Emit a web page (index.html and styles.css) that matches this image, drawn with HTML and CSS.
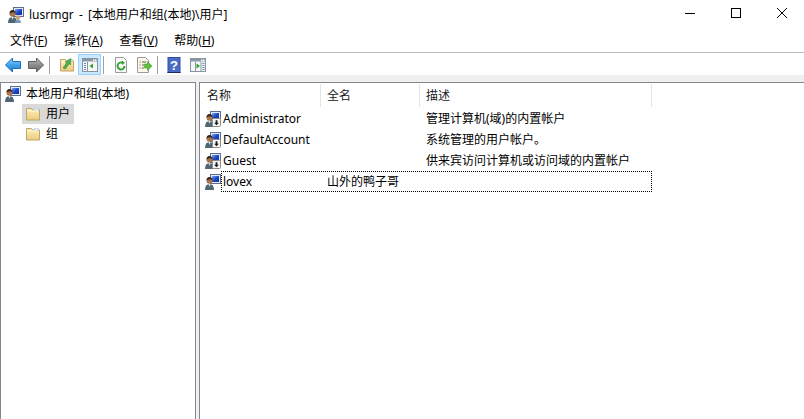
FILE: index.html
```html
<!DOCTYPE html>
<html lang="zh-CN">
<head>
<meta charset="utf-8">
<title>lusrmgr</title>
<link rel="stylesheet" href="styles.css">
</head>
<body>
<svg class="defs" width="0" height="0" aria-hidden="true">
  <defs>
    <linearGradient id="fold" x1="0" y1="0" x2="0" y2="1"><stop offset="0" stop-color="#fdf0bd"/><stop offset="1" stop-color="#eecb7c"/></linearGradient>
    <linearGradient id="scr" x1="0" y1="0" x2="1" y2="1"><stop offset="0" stop-color="#7fa8f5"/><stop offset=".5" stop-color="#1c47c9"/><stop offset="1" stop-color="#12309a"/></linearGradient>
    <linearGradient id="blu" x1="0" y1="0" x2="0" y2="1"><stop offset="0" stop-color="#9bd8fb"/><stop offset=".5" stop-color="#3ea3ec"/><stop offset="1" stop-color="#1f78c8"/></linearGradient>
    <linearGradient id="gry" x1="0" y1="0" x2="0" y2="1"><stop offset="0" stop-color="#c4c4c4"/><stop offset=".5" stop-color="#8c8c8c"/><stop offset="1" stop-color="#6c6c6c"/></linearGradient>
    <symbol id="folder" viewBox="0 0 16 16">
      <path d="M1.500 2.500h5l1 1.500h7v10h-13z" fill="url(#fold)" stroke="#bfa56b"/>
      <path d="M9 2.500h4.500v1.500H9z" fill="#fff" stroke="#a9c6de" stroke-width=".6"/>
      <path d="M2.500 5h11" stroke="#fff8dc"/>
    </symbol>
    <symbol id="person" viewBox="0 0 16 16">
      <rect x="5.500" y=".5" width="10" height="9" fill="#e4eaf4" stroke="#5d6f90"/>
      <rect x="7" y="2" width="7" height="6" fill="url(#scr)"/>
      <circle cx="4.500" cy="6.800" r="3" fill="#a9744a"/>
      <path d="M1.500 6.500q0-3.500 3-3.500t3 3.500q-1.500-1.500-3-1.200t-3 1.200z" fill="#33241a"/>
      <path d="M0 16q0-6 4.500-6T9 16z" fill="#4f6675"/>
      <path d="M3.500 10h2l-1 3z" fill="#e2e2e2"/>
    </symbol>
    <symbol id="down" viewBox="0 0 16 16">
      <use href="#person"/>
      <rect x="7.500" y="7.500" width="8" height="8" rx="1" fill="#f6f6f6" stroke="#8c8c8c"/>
      <path d="M10.600 9.300h1.800v2.400h1.500l-2.400 2.600-2.400-2.600h1.500z" fill="#1a1a1a"/>
    </symbol>
    <symbol id="pane" viewBox="0 0 16 16">
      <rect x=".5" y="1.500" width="15" height="13" fill="#f6f6f6" stroke="#8795a0"/>
      <rect x="1" y="2" width="14" height="2.500" fill="#8a98a3"/>
      <rect x="11" y="2.500" width="1.500" height="1.500" fill="#fff"/><rect x="13" y="2.500" width="1.500" height="1.500" fill="#fff"/>
      <path d="M5.500 5v9" stroke="#8795a0"/>
    </symbol>
  </defs>
</svg>
<div class="window">
  <header class="titlebar">
    <svg class="app-icon" viewBox="0 0 16 16"><use href="#person"/><circle cx="10" cy="10.500" r="2.200" fill="#c9a27e"/><path d="M7 16q0-3.500 3-3.500t3 3.500z" fill="#7d9ab5"/></svg>
    <span class="title">lusrmgr - [本地用户和组(本地)\用户]</span>
    <div class="controls">
      <span class="ctl"><svg width="10" height="10" viewBox="0 0 10 10"><path d="M0 5.500h10" stroke="#000"/></svg></span>
      <span class="ctl"><svg width="10" height="10" viewBox="0 0 10 10"><rect x=".5" y=".5" width="9" height="9" fill="none" stroke="#000"/></svg></span>
      <span class="ctl"><svg width="10" height="10" viewBox="0 0 10 10"><path d="M0 0l10 10M10 0L0 10" stroke="#000" fill="none"/></svg></span>
    </div>
  </header>
  <nav class="menubar">
    <span class="menu">文件(<u>F</u>)</span>
    <span class="menu">操作(<u>A</u>)</span>
    <span class="menu">查看(<u>V</u>)</span>
    <span class="menu">帮助(<u>H</u>)</span>
  </nav>
  <div class="toolbar">
    <span class="tool"><svg class="ticon" viewBox="0 0 16 16"><path d="M.5 8L7.500 1v3.500h8v7h-8V15z" fill="url(#blu)" stroke="#1f6fb8"/></svg></span>
    <span class="tool"><svg class="ticon" viewBox="0 0 16 16"><path d="M15.500 8L8.500 1v3.500h-8v7h8V15z" fill="url(#gry)" stroke="#5e5e5e"/></svg></span>
    <span class="sep"></span>
    <span class="tool"><svg class="ticon" viewBox="0 0 16 16"><use href="#folder"/><path d="M4 11l3.500-5L6 5l6-3.500-.5 6.500L10 6.800 6.500 12z" fill="#4eb04a" stroke="#2f7d2c" stroke-width=".5"/></svg></span>
    <span class="tool active"><svg class="ticon" viewBox="0 0 16 16"><use href="#pane"/><path d="M2 6.500h2M2 8.500h2M2 10.500h2M2 12.500h2" stroke="#5a8cc0"/><path d="M11 6.500v5l-3.500-2.500z" fill="#2ca02c"/></svg></span>
    <span class="sep"></span>
    <span class="tool"><svg class="ticon" viewBox="0 0 16 16"><path d="M2.500.5h8l3 3v12h-11z" fill="#fafafa" stroke="#9a9a9a"/><path d="M11.500 9a3.500 3.500 0 1 1-1.500-2.900" fill="none" stroke="#37a337" stroke-width="2"/><path d="M8.500 3.500l3.500 2-2.500 2.500z" fill="#37a337"/></svg></span>
    <span class="tool"><svg class="ticon" viewBox="0 0 16 16"><path d="M1.500.5h8l3 3v12h-11z" fill="#fdf9e8" stroke="#9a9a9a"/><path d="M3.500 5h1M6 5h4M3.500 8h1M6 8h2M3.500 11h1M6 11h2" stroke="#555"/><path d="M8.500 7h3V4.500L16 9l-4.500 4.500V11h-3z" fill="#5fbf3c" stroke="#3d8f26" stroke-width=".5"/></svg></span>
    <span class="sep"></span>
    <span class="tool help-tool"><svg class="ticon" viewBox="0 0 16 16"><rect x="1.500" y="0" width="13" height="16" fill="#2f4fa8"/><rect x="2.500" y="1" width="11" height="14" fill="#4a6cc4"/><rect x="1.500" y="15" width="13" height="1" fill="#1b2c68"/><text x="8" y="13" class="help">?</text></svg></span>
    <span class="tool"><svg class="ticon" viewBox="0 0 16 16"><use href="#pane"/><path d="M11 5v9" stroke="#8795a0"/><path d="M12.500 6.500h2M12.500 8.500h2M12.500 10.500h2M12.500 12.500h2" stroke="#5a8cc0"/><path d="M6.500 6.500v5l3.500-2.500z" fill="#2ca02c"/></svg></span>
  </div>
  <main class="panes">
    <aside class="tree">
      <div class="root"><svg class="icon" viewBox="0 0 16 16"><use href="#person"/></svg><span>本地用户和组(本地)</span></div>
      <div class="node selected"><svg class="icon" viewBox="0 0 16 16"><use href="#folder"/></svg><span>用户</span></div>
      <div class="node"><svg class="icon" viewBox="0 0 16 16"><use href="#folder"/></svg><span>组</span></div>
    </aside>
    <section class="list">
      <div class="row head">
        <span class="c1 hcell">名称</span><span class="c2 hcell">全名</span><span class="c3 hcell">描述</span>
      </div>
      <div class="row"><span class="c1"><svg class="icon" viewBox="0 0 16 16"><use href="#down"/></svg><span class="name">Administrator</span></span><span class="c2"></span><span class="c3">管理计算机(域)的内置帐户</span></div>
      <div class="row"><span class="c1"><svg class="icon" viewBox="0 0 16 16"><use href="#down"/></svg><span class="name">DefaultAccount</span></span><span class="c2"></span><span class="c3">系统管理的用户帐户。</span></div>
      <div class="row"><span class="c1"><svg class="icon" viewBox="0 0 16 16"><use href="#down"/></svg><span class="name">Guest</span></span><span class="c2"></span><span class="c3">供来宾访问计算机或访问域的内置帐户</span></div>
      <div class="row focus"><span class="c1"><svg class="icon" viewBox="0 0 16 16"><use href="#person"/></svg><span class="name">lovex</span></span><span class="c2">山外的鸭子哥</span><span class="c3"></span></div>
    </section>
  </main>
</div>
</body>
</html>
```
FILE: styles.css
```css
* { box-sizing: border-box; }
html, body { margin: 0; height: 100%; }
body {
  background: #fff;
  color: #000;
  font: 12px/16px "Noto Sans", "Noto Sans CJK SC", sans-serif;
  overflow: hidden;
}
.defs { display: block; height: 0; }
.window { display: flex; flex-direction: column; width: 804px; height: 419px; }

.titlebar { display: flex; align-items: center; height: 30px; padding-left: 8px; flex: none; }
.app-icon { width: 16px; height: 16px; margin-right: 5px; }
.title { flex: 1; font-size: 12px; white-space: nowrap; word-spacing: 2px; }
.controls { display: flex; align-self: flex-start; margin-right: -1px; }
.ctl { width: 46px; height: 26px; display: flex; align-items: center; justify-content: center; }

.menubar { display: flex; align-items: center; height: 22px; padding-left: 3px; flex: none; }
.menu { padding: 0 7px; margin-right: 2.5px; white-space: nowrap; }

.toolbar { display: flex; align-items: center; height: 23px; padding: 1px 0 0 1px; border-top: 1px solid #bdbdbd; flex: none; }
.tool { width: 23px; height: 21px; display: flex; align-items: center; justify-content: center; border: 1px solid transparent; }
.tool.active { background: #cce8ff; border-color: #99d1ff; }
.help-tool { margin-left: -1px; margin-right: 1px; }
.ticon { width: 16px; height: 16px; }
.help { font: bold 13px "Liberation Sans", sans-serif; fill: #fff; text-anchor: middle; }
.sep { width: 1px; height: 18px; background: #a0a0a0; margin: 0 5px 0 2px; }

.panes { flex: 1; display: flex; background: #f0f0f0; padding-top: 7px; gap: 3px; min-height: 0; }
.tree { width: 196px; background: #fff; border: 1px solid #828790; border-width: 1px 1px 0 1px; padding-top: 1px; flex: none; }
.list { flex: 1; background: #fff; border: 1px solid #828790; border-width: 1px 0 0 1px; padding-left: 3px; }

.root { display: flex; align-items: center; height: 20px; padding-left: 4px; gap: 5px; white-space: nowrap; }
.node { display: flex; align-items: center; height: 20px; width: 52px; margin-left: 21px; padding-left: 3px; gap: 5px; }
.node.selected { background: #d9d9d9; }
.icon { width: 16px; height: 16px; flex: none; }

.row { display: flex; align-items: center; height: 21px; width: 449px; white-space: nowrap; position: relative; }
.row.head { height: 25px; align-items: flex-start; padding-top: 1px; color: #1a1a1a; }
.c1 { width: 118px; display: flex; align-items: center; gap: 2px; padding-left: 2px; flex: none; }
.c2 { width: 99px; padding-left: 6px; flex: none; }
.c3 { flex: 1; padding-left: 6px; }
.hcell { height: 23px; line-height: 23px; border-right: 1px solid #e5e5e5; }
.c1.hcell { display: block; padding-left: 4px; }
.row.focus::after { content: ""; position: absolute; top: 0; right: 0; bottom: 0; left: 18px; border: 1px dotted #000; }
```
